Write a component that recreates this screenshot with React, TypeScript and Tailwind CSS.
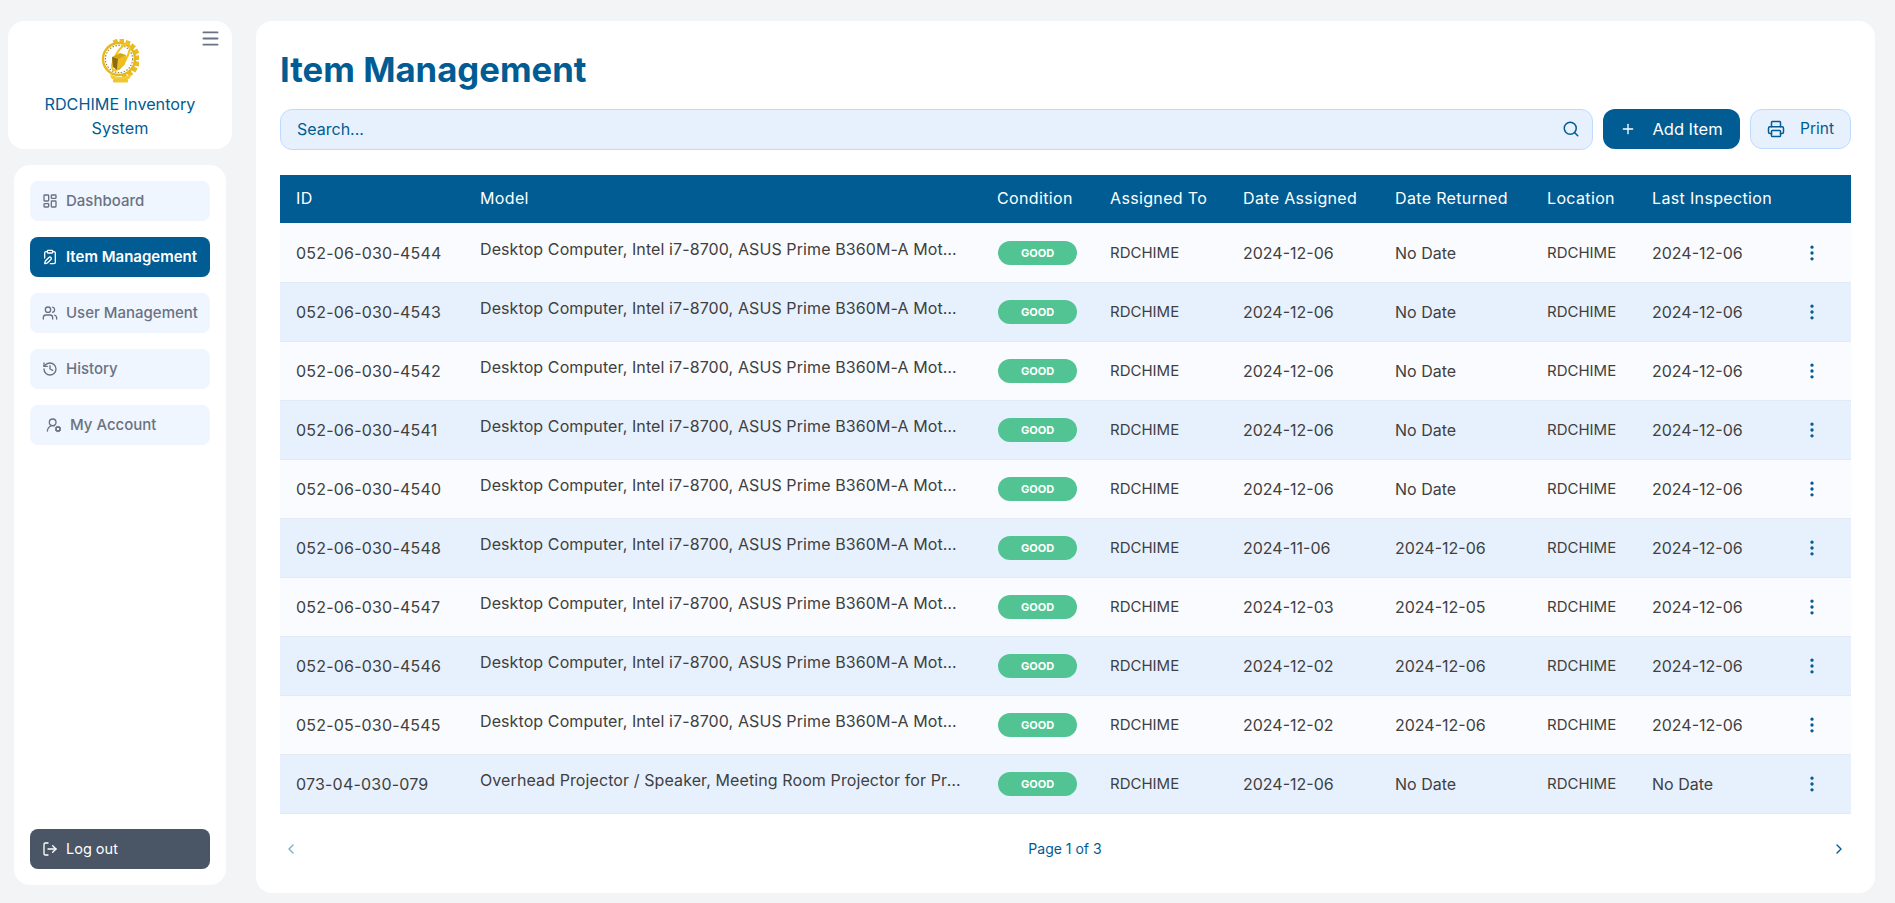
import {
  ChevronLeft,
  ChevronRight,
  ClipboardPen,
  EllipsisVertical,
  History,
  LayoutDashboard,
  LogOut,
  Menu,
  Plus,
  Printer,
  Search,
  UserRoundCog,
  Users,
} from "lucide-react";

const MODEL =
  "Desktop Computer, Intel i7-8700, ASUS Prime B360M-A Motherboard, 16GB DDR4 RAM, 512GB SSD";

const rows = [
  ["052-06-030-4544", MODEL, "2024-12-06", "No Date", "2024-12-06"],
  ["052-06-030-4543", MODEL, "2024-12-06", "No Date", "2024-12-06"],
  ["052-06-030-4542", MODEL, "2024-12-06", "No Date", "2024-12-06"],
  ["052-06-030-4541", MODEL, "2024-12-06", "No Date", "2024-12-06"],
  ["052-06-030-4540", MODEL, "2024-12-06", "No Date", "2024-12-06"],
  ["052-06-030-4548", MODEL, "2024-11-06", "2024-12-06", "2024-12-06"],
  ["052-06-030-4547", MODEL, "2024-12-03", "2024-12-05", "2024-12-06"],
  ["052-06-030-4546", MODEL, "2024-12-02", "2024-12-06", "2024-12-06"],
  ["052-05-030-4545", MODEL, "2024-12-02", "2024-12-06", "2024-12-06"],
  [
    "073-04-030-079",
    "Overhead Projector / Speaker, Meeting Room Projector for Presentations and Training",
    "2024-12-06",
    "No Date",
    "No Date",
  ],
];

const navItems = [
  { label: "Dashboard", icon: LayoutDashboard },
  { label: "Item Management", icon: ClipboardPen, active: true },
  { label: "User Management", icon: Users },
  { label: "History", icon: History },
  { label: "My Account", icon: UserRoundCog, indent: true },
];

const headers = [
  ["ID", "w-[184px]"],
  ["Model", "w-[517px]"],
  ["Condition", "w-[113px]"],
  ["Assigned To", "w-[133px]"],
  ["Date Assigned", "w-[152px]"],
  ["Date Returned", "w-[152px]"],
  ["Location", "w-[105px]"],
  ["Last Inspection", "w-[150px]"],
  ["", ""],
];

const cell = "px-4 pt-[1px]";

function Logo() {
  // gear teeth only run round the right side of the emblem
  const teeth = Array.from({ length: 10 }, (_, i) => -20 + i * 20);
  return (
    <svg viewBox="0 0 38 46" className="h-[46px] w-[38px]">
      {teeth.map((a) => (
        <rect key={a} x="18.5" y="1" width="4.5" height="5" fill="#eabb22" transform={`rotate(${a} 19 21)`} />
      ))}
      <circle cx="18" cy="21" r="16" fill="#fff" stroke="#e6b71e" strokeWidth="2.4" />
      <circle cx="18" cy="21" r="13.6" fill="none" stroke="#9a8a3c" strokeWidth="1.2" strokeDasharray="1.5 1.5" />
      <ellipse cx="20" cy="19" rx="5.5" ry="15" fill="none" stroke="#f2c71c" strokeWidth="2" transform="rotate(30 20 19)" />
      <path d="M11 19l8-4 6 2-1 9-6 6-6-4z" fill="#d6a617" />
      <path d="M11 19l6 2-1 11-4-3z" fill="#8a6a12" />
      <path d="M17 21l8-4-1 9-8 6z" fill="#eebf1f" />
      <path d="M9 36c6 4 15 4 21 0l-1 4c-2 3-17 3-19 0z" fill="#f3cc3a" />
      <rect x="12" y="41" width="15" height="3.5" rx="1" fill="#f0c52e" />
    </svg>
  );
}

function Sidebar() {
  return (
    <aside className="flex w-[224px] flex-none flex-col gap-4 pb-2">
      <div className="relative flex h-[128px] flex-col items-center rounded-2xl bg-white pt-[17px]">
        <Menu strokeWidth={2.2} className="absolute right-[11px] top-[7px] h-[21px] w-[21px] text-gray-500" />
        <Logo />
        <p className="mt-[8px] w-[190px] text-center text-[16.2px] leading-[24px] text-[#005c93]">
          RDCHIME Inventory System
        </p>
      </div>
      <nav className="mx-1.5 flex flex-1 flex-col gap-4 rounded-2xl bg-white p-4">
        {navItems.map((item) => (
          <a
            key={item.label}
            className={
              item.active
                ? "flex h-10 items-center gap-2 rounded-lg bg-[#005c93] px-3 text-[15px] font-semibold text-white"
                : "flex h-10 items-center gap-2 rounded-lg bg-blue-50 px-3 text-[15px] font-medium text-gray-500"
            }
          >
            <item.icon className={item.indent ? "ml-1 h-4 w-4" : "h-4 w-4"} />
            {item.label}
          </a>
        ))}
        <a className="mt-auto flex h-10 items-center gap-2 rounded-lg bg-gray-600 px-3 pb-[1px] text-[14.5px] text-white">
          <LogOut className="h-4 w-4" />
          Log out
        </a>
      </nav>
    </aside>
  );
}

function ItemTable() {
  return (
    <table className="w-full table-fixed border-collapse text-left">
      <thead>
        <tr className="h-12 bg-[#005c93] text-[16px] text-white">
          {headers.map(([label, width], i) => (
            <th key={i} className={`${width} whitespace-nowrap px-4 pb-[2px] font-normal tracking-[0.35px]`}>
              {label}
            </th>
          ))}
        </tr>
      </thead>
      <tbody className="text-[16px] text-neutral-700">
        {rows.map((row, i) => (
          <tr
            key={row[0]}
            className={
              i % 2 === 0
                ? "h-[59px] border-b border-[#e3eaf4] bg-[#fafbff]"
                : "h-[59px] border-b border-[#e3eaf4] bg-[#e7f1fe]"
            }
          >
            <td className={`${cell} tracking-[0.2px]`}>{row[0]}</td>
            <td className="pl-4 pr-5">
              <div className="truncate pb-[7px] tracking-[0.1px]">{row[1]}</div>
            </td>
            <td className={cell}>
              <span className="ml-px flex h-6 w-[79px] items-center justify-center rounded-full bg-[#52c493] text-[11px] font-bold text-white">
                GOOD
              </span>
            </td>
            <td className={`${cell} text-[15px]`}>RDCHIME</td>
            <td className={cell}>{row[2]}</td>
            <td className={cell}>{row[3]}</td>
            <td className={`${cell} text-[15px]`}>RDCHIME</td>
            <td className={cell}>{row[4]}</td>
            <td className={cell}>
              <EllipsisVertical className="h-5 w-5 text-[#005c93]" />
            </td>
          </tr>
        ))}
      </tbody>
    </table>
  );
}

export default function App() {
  return (
    <div className="flex min-h-[903px] gap-6 bg-gray-100 pb-[10px] pl-2 pr-5 pt-[21px] font-['Inter',sans-serif]">
      <Sidebar />
      <main className="min-w-0 flex-1 rounded-2xl bg-white px-6 pt-[28px]">
        <h1 className="h-[60px] text-[34.7px] font-bold leading-[40px] text-[#005c93]">
          Item Management
        </h1>
        <div className="flex items-start gap-2.5">
          <div className="flex h-[41px] flex-1 items-center justify-between rounded-xl border border-blue-200 bg-[#e7f1fe] pb-[1px] pl-4 pr-3 text-[16px] text-[#005c93]">
            <span>Search...</span>
            <Search className="h-[18px] w-[18px]" />
          </div>
          <button className="flex h-10 w-[137px] items-center justify-center gap-4 rounded-xl bg-[#005c93] text-[16.5px] text-white">
            <Plus className="h-4 w-4" />
            Add Item
          </button>
          <button className="flex h-10 w-[101px] items-center justify-center gap-[15px] rounded-xl border border-blue-200 bg-[#e7f1fe] text-[15.5px] text-[#005c93]">
            <Printer className="h-[18px] w-[18px]" />
            Print
          </button>
        </div>
        <div className="mt-[25px]">
          <ItemTable />
        </div>
        <div className="flex h-[70px] items-center justify-between pl-[3px] pr-1 text-[14px] text-[#005c93]">
          <ChevronLeft className="h-4 w-4 opacity-50" />
          <span>Page 1 of 3</span>
          <ChevronRight className="h-4 w-4" />
        </div>
      </main>
    </div>
  );
}
